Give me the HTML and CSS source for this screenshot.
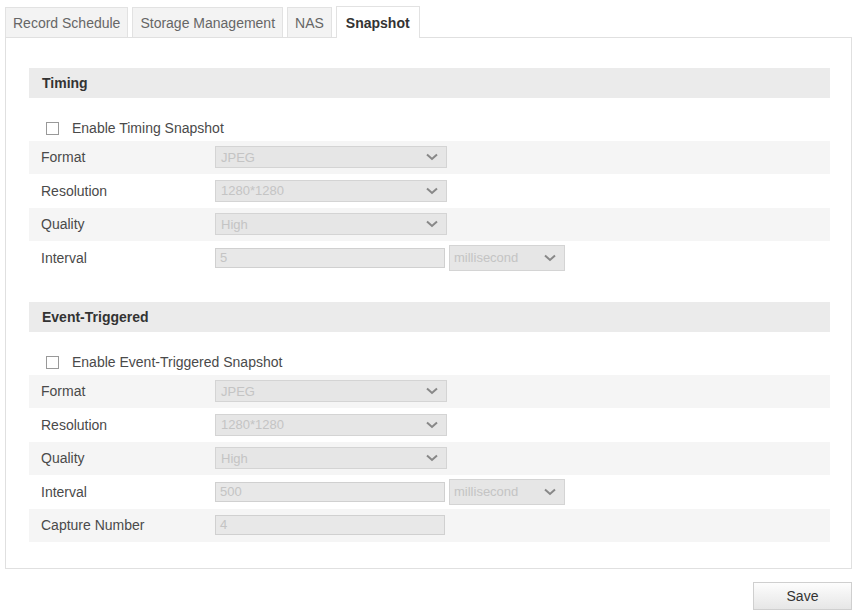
FILE: index.html
```html
<!DOCTYPE html>
<html lang="en">
<head>
    <meta charset="UTF-8">
    <title>Snapshot</title>
    <link rel="stylesheet" href="styles.css">
</head>
<body>
    <div class="page">
        <div class="tabs">
            <div class="tab">Record Schedule</div>
            <div class="tab">Storage Management</div>
            <div class="tab">NAS</div>
            <div class="tab active">Snapshot</div>
        </div>

        <div class="panel">
            <div class="section">
                <div class="section-title">Timing</div>
                <label class="check-row"><span class="checkbox"></span>Enable Timing Snapshot</label>
                <div class="row stripe">
                    <span class="label">Format</span>
                    <div class="select">JPEG<svg viewBox="0 0 12 8"><path d="M1 1.5l5 4.5 5-4.5"/></svg></div>
                </div>
                <div class="row">
                    <span class="label">Resolution</span>
                    <div class="select">1280*1280<svg viewBox="0 0 12 8"><path d="M1 1.5l5 4.5 5-4.5"/></svg></div>
                </div>
                <div class="row stripe">
                    <span class="label">Quality</span>
                    <div class="select">High<svg viewBox="0 0 12 8"><path d="M1 1.5l5 4.5 5-4.5"/></svg></div>
                </div>
                <div class="row">
                    <span class="label">Interval</span>
                    <div class="input">5</div>
                    <div class="select unit">millisecond<svg viewBox="0 0 12 8"><path d="M1 1.5l5 4.5 5-4.5"/></svg></div>
                </div>
            </div>

            <div class="section">
                <div class="section-title">Event-Triggered</div>
                <label class="check-row"><span class="checkbox"></span>Enable Event-Triggered Snapshot</label>
                <div class="row stripe">
                    <span class="label">Format</span>
                    <div class="select">JPEG<svg viewBox="0 0 12 8"><path d="M1 1.5l5 4.5 5-4.5"/></svg></div>
                </div>
                <div class="row">
                    <span class="label">Resolution</span>
                    <div class="select">1280*1280<svg viewBox="0 0 12 8"><path d="M1 1.5l5 4.5 5-4.5"/></svg></div>
                </div>
                <div class="row stripe">
                    <span class="label">Quality</span>
                    <div class="select">High<svg viewBox="0 0 12 8"><path d="M1 1.5l5 4.5 5-4.5"/></svg></div>
                </div>
                <div class="row">
                    <span class="label">Interval</span>
                    <div class="input">500</div>
                    <div class="select unit">millisecond<svg viewBox="0 0 12 8"><path d="M1 1.5l5 4.5 5-4.5"/></svg></div>
                </div>
                <div class="row stripe">
                    <span class="label">Capture Number</span>
                    <div class="input">4</div>
                </div>
            </div>
        </div>

        <div class="actions">
            <button class="save-btn">Save</button>
        </div>
    </div>
</body>
</html>
```

FILE: styles.css
```css
* {
    margin: 0;
    padding: 0;
    box-sizing: border-box;
}

body {
    background: #fff;
    font-family: 'Liberation Sans', Arial, sans-serif;
    font-size: 14px;
    color: #4a4a4a;
}

.page {
    padding: 7px 2px 0 5px;
}

.tabs {
    display: flex;
    gap: 4px;
    height: 30px;
}

.tab {
    height: 30px;
    padding: 0 7px;
    line-height: 30px;
    background: #f3f3f3;
    border: 1px solid #e2e2e2;
    border-bottom: none;
    color: #666;
    white-space: nowrap;
}

.tab.active {
    position: relative;
    z-index: 1;
    height: 32px;
    margin-top: -1px;
    padding: 0 9px;
    line-height: 32px;
    background: #fff;
    font-weight: bold;
    color: #333;
}

.panel {
    border: 1px solid #e0e0e0;
    height: 532px;
    padding: 30px 21px 0 23px;
}

.section + .section {
    margin-top: 27.5px;
}

.section-title {
    height: 30px;
    line-height: 30px;
    padding-left: 13px;
    background: #ebebeb;
    font-weight: bold;
    color: #333;
}

.check-row {
    display: flex;
    align-items: center;
    height: 25px;
    margin-top: 17.5px;
    padding-left: 17px;
}

.checkbox {
    width: 13px;
    height: 13px;
    margin-right: 13px;
    border: 1px solid #999;
    background: #fff;
}

.row {
    display: flex;
    align-items: center;
    height: 33.5px;
    padding-left: 12px;
}

.row.stripe {
    background: #f5f5f5;
}

.label {
    width: 174px;
}

.select {
    display: flex;
    align-items: center;
    justify-content: space-between;
    width: 232px;
    height: 22px;
    padding: 0 8px 0 5px;
    background: #e6e6e6;
    border: 1px solid #d4d4d4;
    color: #c4c4c4;
    font-size: 13px;
}

.select svg {
    width: 12px;
    height: 8px;
    fill: none;
    stroke: #888;
    stroke-width: 2;
}

.select.unit {
    width: 116px;
    height: 26px;
    margin-left: 4px;
    padding-left: 4px;
}

.input {
    width: 230px;
    height: 20px;
    line-height: 18px;
    padding-left: 4px;
    background: #e8e8e8;
    border: 1px solid #d0d0d0;
    color: #c4c4c4;
    font-size: 13px;
}

.actions {
    display: flex;
    justify-content: flex-end;
    margin-top: 13px;
}

.save-btn {
    width: 99px;
    height: 28px;
    background: linear-gradient(#fdfdfd, #e6e6e6);
    border: 1px solid #cfcfcf;
    font-family: 'Liberation Sans', Arial, sans-serif;
    font-size: 14px;
    color: #333;
}
```
